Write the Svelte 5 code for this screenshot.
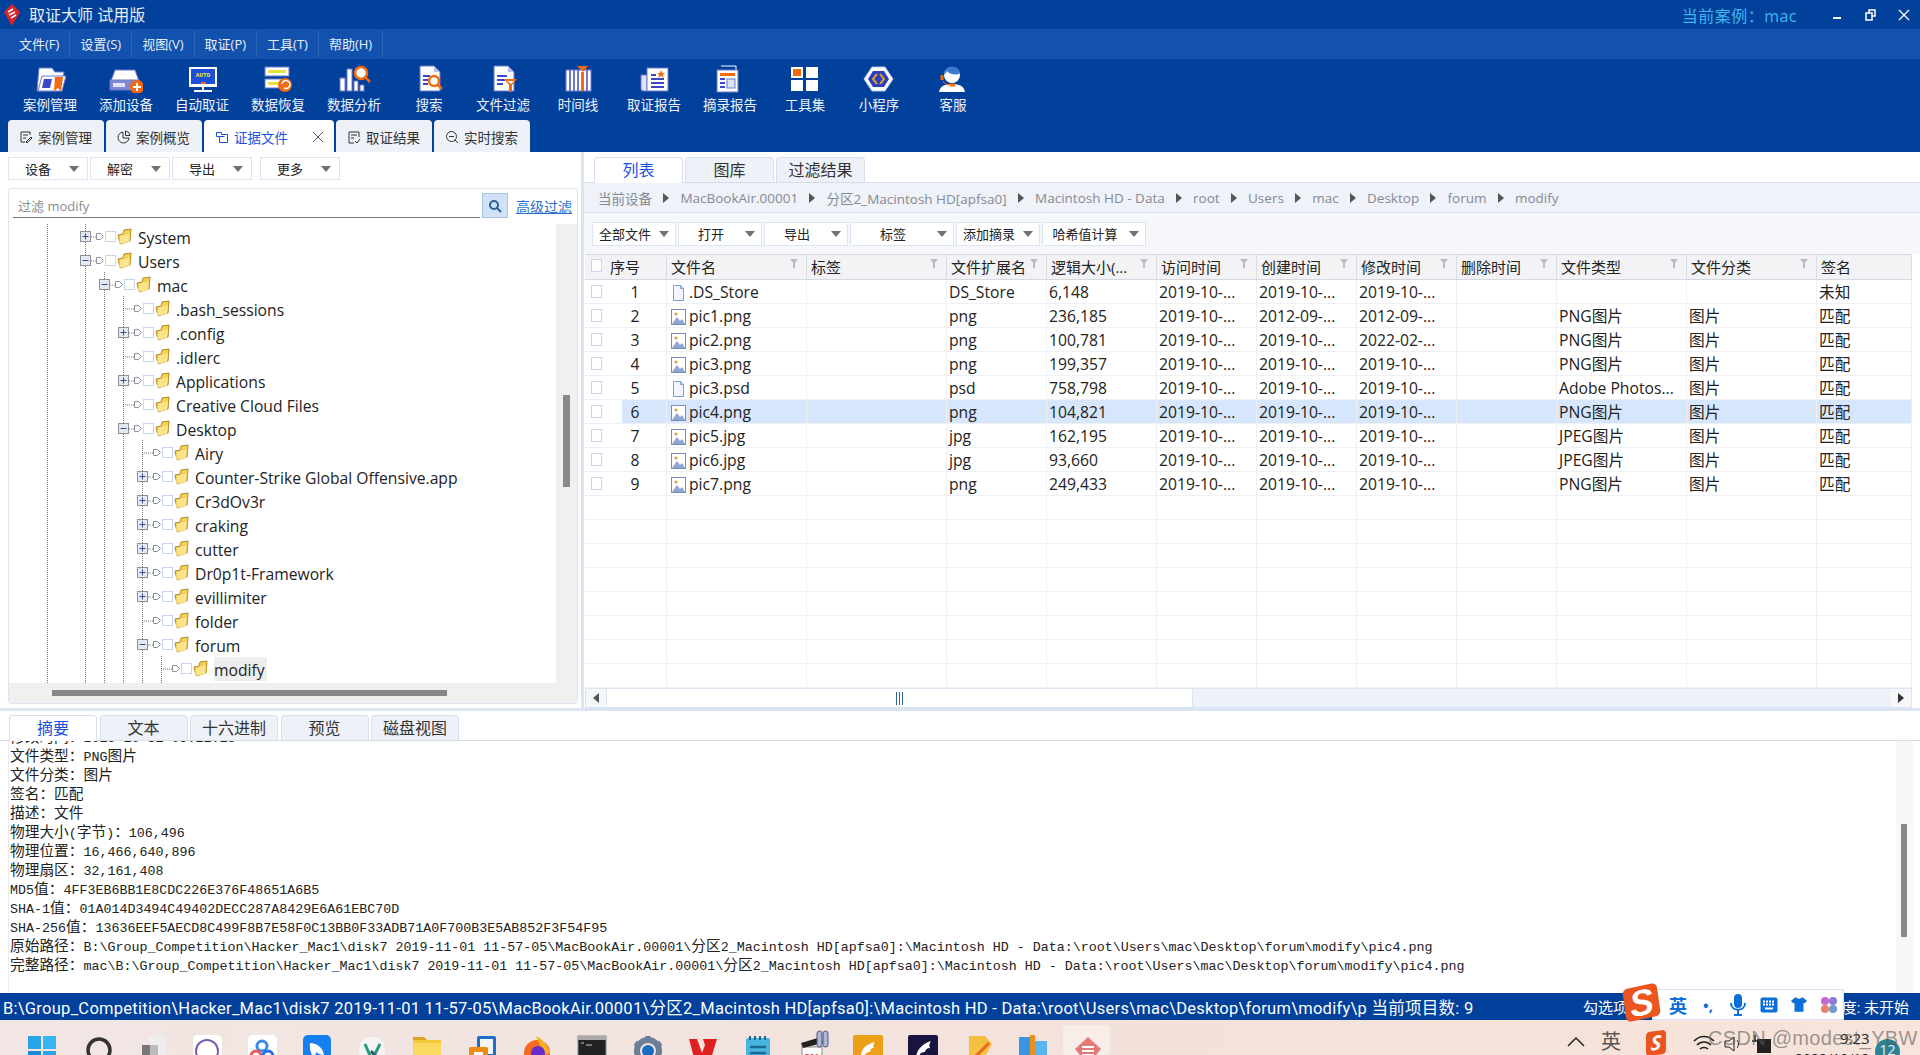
<script>
	const ln = '#6f78cc'
	const or = '#f36a10'
	const colon = '\uff1a'

	const menus = ['文件(F)', '设置(S)', '视图(V)', '取证(P)', '工具(T)', '帮助(H)']

	// shift: the original buttons are not evenly spaced
	const tools = [
		{ label: '案例管理', shift: 0, svg: `<path d="M6 3h13l3 4h9l-3 19H4z" fill="#fff" stroke="${ln}"/><path d="M9 11h24l-4 15H5z" fill="#fff" stroke="${ln}"/><path d="M11 14h8l-2 9H9z" fill="#3c46c8"/><path d="M22 12h8l-2 14-3-3-4 3z" fill="${or}"/>` },
		{ label: '添加设备', shift: 0, svg: `<path d="M6 5h20l4 11H2z" fill="#fff" stroke="${ln}"/><rect x="1" y="15" width="29" height="10" fill="#8088d0" stroke="${ln}"/><rect x="4" y="18" width="12" height="4" fill="#dfe3f5"/><circle cx="28" cy="22" r="7" fill="${or}"/><path d="M28 18v8M24 22h8" stroke="#fff" stroke-width="2"/>` },
		{ label: '自动取证', shift: 0, svg: `<rect x="4" y="2" width="28" height="20" fill="#fff"/><rect x="6" y="4" width="24" height="15" fill="#1d4fd8"/><text x="18" y="12" fill="#f5e63a" font-size="6" font-family="Liberation Mono" font-weight="700" text-anchor="middle">AUTO</text><rect x="16" y="17" width="5" height="2" fill="${or}"/><path d="M18 22v3M9 26h18" stroke="#fff" stroke-width="2"/>` },
		{ label: '数据恢复', shift: 0, svg: `<rect x="4" y="2" width="24" height="9" fill="#fff" stroke="${ln}"/><rect x="7" y="5" width="18" height="3" fill="#e6e23a"/><rect x="4" y="14" width="17" height="9" fill="#fff" stroke="${ln}"/><rect x="7" y="17" width="11" height="3" fill="#e6e23a"/><circle cx="24" cy="20" r="7" fill="${or}"/><path d="M21 19a4 4 0 1 1 2 4" fill="none" stroke="#fff" stroke-width="1.6"/>` },
		{ label: '数据分析', shift: 0, svg: `<rect x="3" y="13" width="5" height="13" fill="#fff" stroke="${ln}"/><rect x="10" y="4" width="5" height="22" fill="#fff" stroke="${ln}"/><rect x="17" y="16" width="4" height="10" fill="#fff" stroke="${ln}"/><rect x="23" y="20" width="4" height="6" fill="#fff" stroke="${ln}"/><circle cx="24" cy="8" r="6" fill="#fff" stroke="${or}" stroke-width="2.5"/><path d="M28 12l5 5" stroke="${or}" stroke-width="2.5"/>` },
		{ label: '搜索', shift: -1, svg: `<path d="M8 1h14l6 6v19H8z" fill="#fff" stroke="${ln}"/><path d="M22 1l6 6h-6z" fill="#b8bde8"/><path d="M11 11h7M11 15h5M11 19h5" stroke="#3c46c8" stroke-width="2"/><circle cx="22" cy="16" r="5" fill="#fff" stroke="${or}" stroke-width="2.5"/><path d="M26 20l4 4" stroke="${or}" stroke-width="2.5"/>` },
		{ label: '文件过滤', shift: -2, svg: `<path d="M8 1h14l6 6v19H8z" fill="#fff" stroke="${ln}"/><path d="M22 1l6 6h-6z" fill="#b8bde8"/><path d="M11 11h10M11 15h8M11 19h6" stroke="#3c46c8" stroke-width="2"/><path d="M18 14h13l-5 6v7h-3v-7z" fill="${or}"/><path d="M21 16h7l-3 3z" fill="#fff"/>` },
		{ label: '时间线', shift: -1, svg: `<rect x="5" y="5" width="25" height="21" fill="#fff" stroke="${ln}"/><path d="M9 5v21M13 5v21M17 5v21M26 5v21" stroke="#6f78cc" stroke-width="2"/><rect x="20" y="7" width="3" height="19" fill="${or}"/><path d="M16 1h11l-5 6z" fill="${or}"/>` },
		{ label: '取证报告', shift: 0, svg: `<path d="M4 10h6v16H6a2 2 0 0 1-2-2z" fill="#dfe3f5" stroke="${ln}"/><rect x="10" y="3" width="21" height="23" fill="#fff" stroke="${ln}"/><path d="M14 10h5M14 14h13M14 18h13M14 22h13" stroke="#3c46c8" stroke-width="2"/><path d="M24 5l1.2 3h3l-2.4 2 1 3-2.8-2-2.8 2 1-3-2.4-2h3z" fill="${or}"/>` },
		{ label: '摘录报告', shift: 0, svg: `<path d="M8 1h15v21" fill="none" stroke="#fff"/><rect x="4" y="5" width="21" height="22" fill="#fff" stroke="${ln}"/><rect x="7" y="8" width="15" height="3" fill="${or}"/><path d="M7 14h5M7 18h5M7 22h5" stroke="#3c46c8" stroke-width="2"/><rect x="14" y="14" width="8" height="9" fill="#dfe3f5" stroke="${ln}"/>` },
		{ label: '工具集', shift: -1, svg: `<rect x="3" y="2" width="12" height="11" fill="#fff"/><rect x="5" y="4" width="8" height="7" fill="${or}"/><rect x="18" y="2" width="12" height="11" fill="#fff"/><rect x="3" y="15" width="12" height="11" fill="#fff"/><rect x="18" y="15" width="12" height="11" fill="#fff"/>` },
		{ label: '小程序', shift: -2, svg: `<path d="M10 2h13l8 12-8 12H10L2 14z" fill="#fff" stroke="#b8c5f0"/><path d="M11 6h11l5 8-5 8H11l-5-8z" fill="#2a3fc0"/><path d="M15 9l-4 5 4 5M18 9l4 5-4 5" fill="none" stroke="#f0a020" stroke-width="2"/>` },
		{ label: '客服', shift: -2, svg: `<path d="M3 27c1-6 6-8 13-8s12 2 13 8z" fill="#fff"/><circle cx="16" cy="10" r="8" fill="#fff"/><path d="M8 10a8 8 0 0 1 16-1c-6 1-11 0-13-3-1 2-2 3-3 4z" fill="#3a7ad0"/><path d="M6 10v5" stroke="${or}" stroke-width="3"/><path d="M7 16c1 3 4 4 8 4" stroke="${or}" fill="none"/><rect x="14" y="18.500" width="5" height="3" fill="${or}"/>` }
	]

	const mainTabs = [
		{ label: '案例管理', icon: 'edit' },
		{ label: '案例概览', icon: 'pie' },
		{ label: '证据文件', icon: 'copy', active: true },
		{ label: '取证结果', icon: 'result' },
		{ label: '实时搜索', icon: 'search' }
	]

	const tree = [
		{ name: 'System', level: 0, mark: 'plus' },
		{ name: 'Users', level: 0, mark: 'minus' },
		{ name: 'mac', level: 1, mark: 'minus' },
		{ name: '.bash_sessions', level: 2 },
		{ name: '.config', level: 2, mark: 'plus' },
		{ name: '.idlerc', level: 2 },
		{ name: 'Applications', level: 2, mark: 'plus' },
		{ name: 'Creative Cloud Files', level: 2 },
		{ name: 'Desktop', level: 2, mark: 'minus' },
		{ name: 'Airy', level: 3 },
		{ name: 'Counter-Strike Global Offensive.app', level: 3, mark: 'plus' },
		{ name: 'Cr3dOv3r', level: 3, mark: 'plus' },
		{ name: 'craking', level: 3, mark: 'plus' },
		{ name: 'cutter', level: 3, mark: 'plus' },
		{ name: 'Dr0p1t-Framework', level: 3, mark: 'plus' },
		{ name: 'evillimiter', level: 3, mark: 'plus' },
		{ name: 'folder', level: 3 },
		{ name: 'forum', level: 3, mark: 'minus' },
		{ name: 'modify', level: 4, selected: true }
	]
	// dotted guides of the tree: x inside the tree, first y inside the tree
	const guides = [
		[38, 0], [76, 0], [95, 48], [114, 72], [133, 216], [152, 432]
	]

	const crumbs = ['当前设备', 'MacBookAir.00001', '分区2_Macintosh HD[apfsa0]', 'Macintosh HD - Data', 'root', 'Users', 'mac', 'Desktop', 'forum', 'modify']

	const fileBtns = [
		{ label: '全部文件', w: 84 },
		{ label: '打开', w: 84 },
		{ label: '导出', w: 84 },
		{ label: '标签', w: 104 },
		{ label: '添加摘录', w: 84 },
		{ label: '哈希值计算', w: 104 }
	]

	const heads = ['序号', '文件名', '标签', '文件扩展名', '逻辑大小(...', '访问时间', '创建时间', '修改时间', '删除时间', '文件类型', '文件分类', '签名']

	const d = '2019-10-...'
	const rows = [
		[1, '.DS_Store', 'doc', 'DS_Store', '6,148', d, d, d, '', '', '未知'],
		[2, 'pic1.png', 'img', 'png', '236,185', d, '2012-09-...', '2012-09-...', 'PNG图片', '图片', '匹配'],
		[3, 'pic2.png', 'img', 'png', '100,781', d, d, '2022-02-...', 'PNG图片', '图片', '匹配'],
		[4, 'pic3.png', 'img', 'png', '199,357', d, d, d, 'PNG图片', '图片', '匹配'],
		[5, 'pic3.psd', 'doc', 'psd', '758,798', d, d, d, 'Adobe Photos...', '图片', '匹配'],
		[6, 'pic4.png', 'img', 'png', '104,821', d, d, d, 'PNG图片', '图片', '匹配'],
		[7, 'pic5.jpg', 'img', 'jpg', '162,195', d, d, d, 'JPEG图片', '图片', '匹配'],
		[8, 'pic6.jpg', 'img', 'jpg', '93,660', d, d, d, 'JPEG图片', '图片', '匹配'],
		[9, 'pic7.png', 'img', 'png', '249,433', d, d, d, 'PNG图片', '图片', '匹配']
	].map(([seq, name, icon, ext, size, access, created, modified, type, cat, sign]) => ({ seq, name, icon, ext, size, access, created, modified, type, cat, sign }))

	const emptyRows = Array(9).fill(0)

	const bottomTabs = ['摘要', '文本', '十六进制', '预览', '磁盘视图']

	const tail = String.raw`B:\Group_Competition\Hacker_Mac1\disk7 2019-11-01 11-57-05\MacBookAir.00001\分区2_Macintosh HD[apfsa0]:\Macintosh HD - Data:\root\Users\mac\Desktop\forum\modify\pic4.png`
	const summary = [
		'修改时间' + colon + '2019-10-31 05:21:18',
		'文件类型' + colon + 'PNG图片',
		'文件分类' + colon + '图片',
		'签名' + colon + '匹配',
		'描述' + colon + '文件',
		'物理大小(字节)' + colon + '106,496',
		'物理位置' + colon + '16,466,640,896',
		'物理扇区' + colon + '32,161,408',
		'MD5值' + colon + '4FF3EB6BB1E8CDC226E376F48651A6B5',
		'SHA-1值' + colon + '01A014D3494C49402DECC287A8429E6A61EBC70D',
		'SHA-256值' + colon + '13636EEF5AECD8C499F8B7E58F0C13BB0F33ADB71A0F700B3E5AB852F3F54F95',
		'原始路径' + colon + tail,
		'完整路径' + colon + 'mac\\' + tail
	]

	// latin and CJK runs get different sizes, the original font is half-width
	function runs(line) {
		return line.split(/([\u4e00-\u9fff\uff00-\uffef]+)/).filter(Boolean).map((text) => ({
			text,
			cjk: /[\u4e00-\u9fff\uff00-\uffef]/.test(text)
		}))
	}

	const statusPath = String.raw`B:\Group_Competition\Hacker_Mac1\disk7 2019-11-01 11-57-05\MacBookAir.00001\分区2_Macintosh HD[apfsa0]:\Macintosh HD - Data:\root\Users\mac\Desktop\forum\modify\p`

	const taskIcons = [
		`<rect x="1" y="1" width="13" height="13" fill="#2aa4e8"/><rect x="16" y="1" width="13" height="13" fill="#38b6f0"/><rect x="1" y="16" width="13" height="13" fill="#1c86d8"/><rect x="16" y="16" width="13" height="13" fill="#2aa4e8"/>`,
		`<circle cx="17" cy="15" r="11" fill="none" stroke="#333" stroke-width="3.500"/>`,
		`<rect x="12" y="1" width="17" height="24" fill="#eee"/><rect x="5" y="10" width="16" height="20" fill="#777"/><rect x="13" y="10" width="8" height="20" fill="#bbb"/>`,
		`<rect x="1" y="0" width="29" height="30" rx="5" fill="#fff"/><circle cx="15" cy="16" r="11" fill="none" stroke="#7a5fb0" stroke-width="2"/>`,
		`<rect x="1" y="0" width="29" height="30" rx="5" fill="#fff"/><circle cx="15" cy="11" r="5" fill="none" stroke="#3a8ae8" stroke-width="3"/><circle cx="9" cy="21" r="5" fill="none" stroke="#e85a5a" stroke-width="3"/><circle cx="21" cy="21" r="5" fill="none" stroke="#2a6ae8" stroke-width="3"/>`,
		`<rect x="1" y="0" width="28" height="30" rx="5" fill="#1680f0"/><path d="M8 8c6 0 13 4 14 12-3 0-6-1-8-3l-1 8c-3-4-6-10-5-17z" fill="#fff"/>`,
		`<rect x="2" y="2" width="26" height="28" rx="12" fill="#f4f4f4"/><path d="M8 9l7 16L23 9" fill="none" stroke="#2a9a7a" stroke-width="3"/><path d="M14 16l8 9" stroke="#2a5a7a" stroke-width="3"/>`,
		`<path d="M1 2h11l3 3h14v25H1z" fill="#f5c93a"/><rect x="1" y="8" width="28" height="22" fill="#fbd95e"/><path d="M1 2h11l3 3H1z" fill="#d9a520"/>`,
		`<rect x="10" y="1" width="19" height="21" rx="2" fill="#1c70c8"/><rect x="13" y="4" width="13" height="15" fill="#f4f4f4"/><rect x="2" y="12" width="19" height="18" rx="2" fill="#f08a10"/><rect x="7" y="17" width="9" height="13" fill="#fff"/>`,
		`<circle cx="15" cy="18" r="13" fill="#f56a20"/><path d="M14 1c6 3 12 9 14 17l-6 2z" fill="#fbb020"/><circle cx="16" cy="18" r="7" fill="#6a2ac8"/>`,
		`<rect x="1" y="1" width="28" height="29" fill="#222" stroke="#888"/><rect x="1" y="1" width="28" height="4" fill="#aaa"/><path d="M4 8h3M9 10h6" stroke="#ccc"/>`,
		`<circle cx="15" cy="16" r="11" fill="none" stroke="#6a7f95" stroke-width="6"/><path d="M15 1v6M15 25v5M2 8l5 3M23 21l5 3M28 8l-5 3M7 21l-5 3" stroke="#6a7f95" stroke-width="5"/><circle cx="15" cy="16" r="6" fill="#1a6ac0"/>`,
		`<path d="M1 4h8l5 14 3-8-2-6h14l-8 26h-7l-3-8-3 8H8z" fill="#e02020"/>`,
		`<rect x="3" y="3" width="24" height="27" rx="2" fill="#4ab4e0"/><path d="M7 1v4M12 1v4M17 1v4M22 1v4" stroke="#1a6a90" stroke-width="2"/><path d="M7 12h16M7 18h16M7 24h16" stroke="#1a6a90" stroke-width="2.500"/>`,
		`<rect x="4" y="12" width="20" height="18" fill="#fff" stroke="#888"/><path d="M3 8l20-6 2 6-20 5z" fill="#222"/><rect x="19" y="-4" width="5" height="16" rx="2.500" fill="#aab8d8" stroke="#557"/><rect x="25" y="-4" width="5" height="16" rx="2.500" fill="#aab8d8" stroke="#557"/><text x="14" y="25" font-size="9" text-anchor="middle" fill="#c33" font-family="Liberation Sans">321</text>`,
		`<rect x="0" y="0" width="30" height="30" rx="2" fill="#eda017"/><path d="M8 22c0-9 6-13 14-15-2 3-2 5-1 6-3 0-4 2-4 4-3 0-5 1-7 7z" fill="#fff"/>`,
		`<rect x="0" y="0" width="30" height="30" rx="2" fill="#1a1540"/><path d="M8 24c0-9 6-15 15-18-2 3-2 5-1 7-3 0-5 2-5 4-4 0-6 2-7 8z" fill="#fff"/>`,
		`<path d="M6 1h16l7 8-12 21H6z" fill="#f5c040"/><path d="M8 26L26 8" stroke="#e86a20" stroke-width="3"/>`,
		`<rect x="1" y="2" width="13" height="28" fill="#3a94e0"/><rect x="14" y="6" width="15" height="24" fill="#5ab4f0"/><rect x="12" y="0" width="5" height="30" fill="#e89020"/>`,
		`<path d="M15 2l13 12-13 16L2 14z" fill="#d82020"/><path d="M9 12h12M9 16h12M9 20h12" stroke="#fff" stroke-width="2"/>`
	]
</script>

<div class="page">
	<header class="title">
		<svg class="logo" width="20" height="24" viewBox="0 0 20 24"><path d="M10 1l8 8-8 14-8-14z" fill="#d8242a"/><path d="M6 9l5-3M7 12l6-3M9 15l5-3" stroke="#fff" stroke-width="1.500"/></svg>
		<span class="app-name">取证大师 试用版</span>
		<span class="case-name">当前案例{colon}mac</span>
		<div class="win-btns">
			<svg width="16" height="16" viewBox="0 0 16 16"><path d="M3 11h8" stroke="#fff" stroke-width="2"/></svg>
			<svg width="16" height="16" viewBox="0 0 16 16"><path d="M6 6V3h6v6H9M3 6h6v7H3z" fill="none" stroke="#fff" stroke-width="1.500"/></svg>
			<svg width="16" height="16" viewBox="0 0 16 16"><path d="M3 3l10 10M13 3L3 13" stroke="#fff" stroke-width="1.300"/></svg>
		</div>
	</header>

	<nav class="menu">
		{#each menus as m}
			<span class="menu-item">{m}</span>
		{/each}
	</nav>

	<div class="tools">
		{#each tools as t}
			<div class="tool" style="margin-left:{t.shift}px">
				<svg width="34" height="28" viewBox="0 0 34 28">{@html t.svg}</svg>
				<span>{t.label}</span>
			</div>
		{/each}
	</div>

	<div class="main-tabs">
		{#each mainTabs as t}
			<div class="main-tab" class:active={t.active}>
				<svg width="14" height="14" viewBox="0 0 14 14" fill="none" stroke="currentColor">
					{#if t.icon === 'edit'}
						<path d="M11 5V2H2v10h4M4 5h5M4 8h3M7 12l5-5 1 1-5 5z" />
					{:else if t.icon === 'pie'}
						<path d="M6 2a5.500 5.500 0 1 0 6 6H6zM8.500 1v4.500H13A5 5 0 0 0 8.500 1z" />
					{:else if t.icon === 'copy'}
						<path d="M1.500 2.500h5v2h6v8h-8v-6h-3zM4.500 6.500h5" />
					{:else if t.icon === 'result'}
						<path d="M12 7V2H2v11h5M4 5h6M4 8h3M8 11l2 2 3-4" />
					{:else}
						<circle cx="6.500" cy="6.500" r="5" /><path d="M4 6.500h5M10 10l3 3" />
					{/if}
				</svg>
				<span>{t.label}</span>
				{#if t.active}
					<svg class="tab-close" width="12" height="12" viewBox="0 0 12 12"><path d="M1 1l10 10M11 1L1 11" stroke="#555" /></svg>
				{/if}
			</div>
		{/each}
	</div>

	<main class="work">
		<section class="left">
			<div class="drop-row">
				<button class="drop left-drop">设备<i class="caret"></i></button>
				<button class="drop left-drop">解密<i class="caret"></i></button>
				<button class="drop left-drop">导出<i class="caret"></i></button>
				<button class="drop left-drop more">更多<i class="caret"></i></button>
			</div>
			<div class="tree-box">
				<div class="filter">
					<div class="filter-input">过滤 modify</div>
					<div class="filter-btn">
						<svg width="14" height="14" viewBox="0 0 14 14"><circle cx="6" cy="6" r="4" fill="none" stroke="#2f5f98" stroke-width="2" /><path d="M9 9l4 4" stroke="#2f5f98" stroke-width="2" /></svg>
					</div>
					<span class="filter-link">高级过滤</span>
				</div>
				<div class="tree">
					{#each guides as g}
						<i class="guide" style="left:{g[0]}px;top:{g[1]}px"></i>
					{/each}
					{#each tree as n}
						<div class="node" style="padding-left:{71 + n.level * 19}px">
							<svg width="52" height="24" viewBox="0 0 52 24">
								<path d="M5 12h11" stroke="#777" stroke-dasharray="1 1" />
								{#if n.mark}
									<rect x="0.500" y="6.500" width="10" height="10" fill="#e4e9f2" stroke="#8a8f9a" />
									<path d="M2.500 11.500h6" stroke="#34508c" />
									{#if n.mark === 'plus'}<path d="M5.500 8.500v6" stroke="#34508c" />{/if}
								{/if}
								<path d="M16.500 8.500h4l3 3-3 3h-4z" fill="#fff" stroke="#8a8f9a" />
								<rect x="25.500" y="6.500" width="10" height="10" fill="#fff" stroke="#c8d6f4" />
								<path d="M38 10l5-1 1-4 7-1-1 12-10 3z" fill="#f5cf52" stroke="#b58a1c" />
								<path d="M40 11l10-3-1 9-10 2z" fill="#fce48a" />
							</svg>
							<span class="node-name" class:selected={n.selected}>{n.name}</span>
						</div>
					{/each}
					<div class="tree-vbar"><i></i></div>
				</div>
				<div class="tree-hbar"><i></i></div>
			</div>
		</section>

		<section class="right">
			<div class="tabs right-tabs">
				<div class="tab active">列表</div>
				<div class="tab">图库</div>
				<div class="tab wide">过滤结果</div>
			</div>
			<div class="crumbs">
				{#each crumbs as c, i}
					{#if i > 0}<i class="crumb-arrow"></i>{/if}
					<span>{c}</span>
				{/each}
			</div>
			<div class="file-tools">
				{#each fileBtns as b}
					<button class="drop" style="width:{b.w}px">{b.label}<i class="caret"></i></button>
				{/each}
			</div>
			<div class="grid">
				<div class="row head">
					<div class="cell check-cell">
						<i class="check"></i><span>序号</span>
					</div>
					{#each heads.slice(1) as h, i}
						<div class="cell">
							<span>{h}</span>
							{#if i < heads.length - 2}
								<svg class="funnel" width="10" height="10" viewBox="0 0 10 10"><path d="M1 1h8L6 5v5H4V5z" fill="#b9bcc2" /></svg>
							{/if}
						</div>
					{/each}
				</div>
				<div class="grid-body">
					{#each rows as r}
						<div class="row" class:picked={r.seq === 6}>
							<div class="cell check-cell">
								<i class="check"></i><span class="seq">{r.seq}</span>
							</div>
							<div class="cell name-cell">
								<svg width="15" height="16" viewBox="0 0 15 16">
									{#if r.icon === 'doc'}
										<path d="M2.500 0.500h7l3 3v12h-10z" fill="#f2f7ff" stroke="#7a9ccf" /><path d="M9.500 0.500v3h3" fill="none" stroke="#7a9ccf" />
									{:else}
										<rect x="0.500" y="0.500" width="14" height="15" fill="#fff" stroke="#7d8cb8" /><circle cx="5" cy="5" r="1.500" fill="#f2974a" /><path d="M1 15l5-7 3 4 2-2 3 5z" fill="#8fa5d4" />
									{/if}
								</svg>
								<span>{r.name}</span>
							</div>
							<div class="cell"></div>
							<div class="cell">{r.ext}</div>
							<div class="cell">{r.size}</div>
							<div class="cell">{r.access}</div>
							<div class="cell">{r.created}</div>
							<div class="cell">{r.modified}</div>
							<div class="cell"></div>
							<div class="cell">{r.type}</div>
							<div class="cell">{r.cat}</div>
							<div class="cell">{r.sign}</div>
						</div>
					{/each}
					{#each emptyRows as _}
						<div class="row">
							{#each heads as h}<div class="cell"></div>{/each}
						</div>
					{/each}
				</div>
				<div class="grid-hbar">
					<span class="bar-end"><i class="tri-left"></i></span>
					<span class="bar-thumb"><i></i></span>
					<span class="bar-rest"></span>
					<span class="bar-end"><i class="tri-right"></i></span>
				</div>
			</div>
		</section>
	</main>

	<section class="bottom">
		<div class="tabs bottom-tabs">
			{#each bottomTabs as t, i}
				<div class="tab" class:active={i === 0}>{t}</div>
			{/each}
		</div>
		<div class="summary">
			<div class="lines">
				{#each summary as line}
					<div class="line">
						{#each runs(line) as run}<span class:cjk={run.cjk}>{run.text}</span>{/each}
					</div>
				{/each}
			</div>
			<div class="summary-bar"><i></i></div>
		</div>
	</section>

	<footer class="status">
		<span class="status-path">{statusPath} 当前项目数: 9</span>
		<span class="status-check">勾选项目数: 0</span>
		<span class="status-prog">进度: 未开始</span>
	</footer>

	<div class="taskbar">
		<i class="task-active"></i>
		{#each taskIcons as icon}
			<div class="task-item">
				<svg width="30" height="30" viewBox="0 0 30 30" overflow="visible">{@html icon}</svg>
			</div>
		{/each}
		<div class="tray">
			<svg width="22" height="12" viewBox="0 0 22 12"><path d="M3 11l8-8 8 8" fill="none" stroke="#222" stroke-width="1.500" /></svg>
			<span class="tray-ime">英</span>
			<span class="tray-s">S</span>
			<svg class="tray-wifi" width="22" height="18" viewBox="0 0 22 18"><path d="M1 6c6-6 14-6 20 0M4 10c4-4 10-4 14 0M7 14c2-2 6-2 8 0" fill="none" stroke="#222" stroke-width="1.600" /></svg>
			<svg class="tray-sound" width="20" height="18" viewBox="0 0 20 18"><path d="M2 6h4l5-4v14l-5-4H2z" fill="none" stroke="#222" /><path d="M14 5c2 2 2 6 0 8" fill="none" stroke="#222" /></svg>
			<svg class="tray-power" width="20" height="18" viewBox="0 0 20 18"><rect x="5" y="4" width="14" height="14" fill="#222" /><path d="M0 6h5M3 0v6" stroke="#222" stroke-width="1.500" /></svg>
		</div>
		<span class="clock">9:23</span>
		<span class="clock-date">2022/10/12</span>
		<span class="badge">12</span>
		<span class="watermark">CSDN @modest_YBW</span>
	</div>

	<div class="ime">
		<span class="ime-logo"><b>S</b></span>
		<div class="ime-bar">
			<span class="ime-lang">英</span>
			<span class="ime-punct">•,</span>
			<svg class="ime-mic" width="16" height="24" viewBox="0 0 16 24"><rect x="4" y="1" width="8" height="14" rx="4" fill="#0a6fd8" /><path d="M1 10c0 9 14 9 14 0M8 17v5M4 22h8" fill="none" stroke="#0a6fd8" stroke-width="2" /></svg>
			<svg class="ime-kb" width="18" height="16" viewBox="0 0 18 16"><rect x="0.500" y="0.500" width="17" height="15" rx="2" fill="#0a6fd8" /><path d="M3 4.500h12M3 7.500h12" stroke="#fff" stroke-dasharray="2 1" stroke-width="2" /><path d="M5 11.500h8" stroke="#fff" stroke-width="2" /></svg>
			<svg width="18" height="17" viewBox="0 0 20 18"><path d="M6 1l4 2 4-2 5 4-3 3-1-1v10H5V7L4 8 1 5z" fill="#0a6fd8" /></svg>
			<svg width="18" height="18" viewBox="0 0 18 18"><circle cx="5" cy="5" r="4" fill="#c06ad0" /><circle cx="13" cy="5" r="4" fill="#8a7ad8" /><circle cx="5" cy="13" r="4" fill="#e8806a" /><circle cx="13" cy="13" r="4" fill="#6a9ad8" /></svg>
		</div>
	</div>
</div>

<style>
	:global(body) {
		margin: 0;
		background: #fff;
	}

	.page {
		position: relative;
		display: flex;
		flex-direction: column;
		width: 1920px;
		height: 1055px;
		overflow: hidden;
		font-family: 'Open Sans', 'Noto Sans CJK SC', sans-serif;
		color: #222;
	}

	i {
		display: block;
		font-style: normal;
	}

	button {
		font: inherit;
		color: inherit;
		background: #fff;
		padding: 0;
	}

	/* title */
	.title {
		display: flex;
		align-items: center;
		height: 29px;
		background: #01419c;
		color: #fff;
	}
	.logo {
		margin-left: 2px;
	}
	.app-name {
		margin: 0 0 2px 7px;
		font-size: 16px;
		color: #e8eef8;
	}
	.case-name {
		margin-left: auto;
		font-size: 16px;
		letter-spacing: 0.5px;
		color: #3fb6ef;
	}
	.win-btns {
		display: flex;
		gap: 17px;
		margin: 0 8px 0 33px;
	}

	/* menu */
	.menu {
		display: flex;
		align-items: center;
		height: 30px;
		padding-left: 9px;
		background: #1251ad;
	}
	.menu-item {
		padding: 0 10px;
		line-height: 26px;
		font-size: 13px;
		color: #e8eef8;
		border-right: 1px solid #2c65b8;
	}

	/* big toolbar */
	.tools {
		display: flex;
		height: 61px;
		padding-left: 12px;
		background: #01419c;
	}
	.tool {
		display: flex;
		flex-direction: column;
		align-items: center;
		width: 76px;
		flex: none;
		padding-top: 6px;
		color: #eef3fb;
		font-size: 13.500px;
		line-height: 20px;
	}
	.tool svg {
		margin-bottom: 2px;
	}

	/* main tabs */
	.main-tabs {
		display: flex;
		gap: 2px;
		height: 32px;
		padding-left: 8px;
		background: #01419c;
	}
	.main-tab {
		display: flex;
		align-items: center;
		gap: 5px;
		width: 96px;
		padding: 1px 0 0 11px;
		box-sizing: border-box;
		background: #eef1f7;
		border-radius: 4px 4px 0 0;
		font-size: 13.500px;
		color: #333;
	}
	.main-tab.active {
		width: 130px;
		background: #fff;
		color: #1a50e0;
	}
	.tab-close {
		margin-left: auto;
		margin-right: 10px;
	}

	/* work area */
	.work {
		display: flex;
		height: 556px;
		flex: none;
		border-bottom: 3px solid #dbe4f3;
	}
	.left {
		display: flex;
		flex-direction: column;
		width: 581px;
		flex: none;
		box-sizing: border-box;
		padding: 5px 3px 0 8px;
	}
	.drop-row {
		display: flex;
		gap: 2px;
		height: 23px;
	}
	.drop {
		position: relative;
		display: block;
		box-sizing: border-box;
		height: 24px;
		border: 1px solid #dbe4f3;
		font-size: 13px;
		line-height: 21px;
		text-align: left;
		padding-left: 16px;
		flex: none;
	}
	.left-drop {
		width: 80px;
		height: 23px;
		line-height: 22px;
	}
	.left-drop .caret {
		right: 8px;
	}
	.more {
		margin-left: 6px;
	}
	.caret {
		position: absolute;
		right: 6px;
		top: 8px;
		border: 5px solid transparent;
		border-top: 6px solid #6e7178;
		border-bottom: 0;
	}
	.tree-box {
		display: flex;
		flex-direction: column;
		height: 516px;
		margin-top: 8px;
		box-sizing: border-box;
		border: 1px solid #dbe4f3;
		border-radius: 3px;
		overflow: hidden;
	}
	.filter {
		display: flex;
		align-items: stretch;
		flex: none;
		height: 25px;
		margin: 4px 0 0 4px;
	}
	.filter-input {
		width: 467px;
		box-sizing: border-box;
		padding-left: 5px;
		border-bottom: 1px solid #777;
		font-size: 13px;
		line-height: 26px;
		color: #8d8d8d;
		background: #fff;
	}
	.filter-btn {
		display: flex;
		align-items: center;
		justify-content: center;
		width: 26px;
		margin-left: 2px;
		background: #cfe2f8;
		border: 1px solid #a8c4e8;
		box-sizing: border-box;
	}
	.filter-link {
		margin-left: 8px;
		font-size: 14px;
		line-height: 27px;
		color: #2a6fd0;
		text-decoration: underline;
	}
	.tree {
		position: relative;
		flex: 1;
		margin-top: 6px;
		padding-top: 1px;
		overflow: hidden;
	}
	.guide {
		position: absolute;
		bottom: 0;
		border-left: 1px dotted #777;
	}
	.node {
		position: relative;
		display: flex;
		align-items: center;
		height: 24px;
	}
	.node-name {
		margin-left: 6px;
		padding: 2px 2px 0 0;
		font-size: 15.700px;
		line-height: 22px;
		white-space: nowrap;
	}
	.node-name.selected {
		background: #eeeeee;
	}
	.tree-vbar {
		position: absolute;
		top: 0;
		right: 0;
		bottom: 0;
		width: 21px;
		background: #f0f0f0;
	}
	.tree-vbar i {
		position: absolute;
		left: 7px;
		top: 171px;
		width: 7px;
		height: 92px;
		background: #888;
	}
	.tree-hbar {
		flex: none;
		height: 20px;
		background: #f0f0f0;
		display: flex;
		align-items: center;
	}
	.tree-hbar i {
		width: 395px;
		height: 6px;
		margin-left: 43px;
		background: #888;
	}

	/* right side */
	.right {
		display: flex;
		flex-direction: column;
		flex: 1;
		min-width: 0;
		border-left: 3px solid #dbe4f3;
		padding-left: 0;
	}
	.tabs {
		display: flex;
		flex: none;
		border-bottom: 1px solid #d5dcea;
		box-sizing: border-box;
	}
	.tab {
		position: relative;
		width: 89px;
		box-sizing: border-box;
		margin-right: 2px;
		background: #eef1f7;
		border: 1px solid #d5dff0;
		border-bottom: 0;
		border-radius: 4px 4px 0 0;
		text-align: center;
		font-size: 16px;
		color: #333;
	}
	.tab.active {
		background: #fff;
		color: #1a50e0;
		margin-bottom: -1px;
	}
	.right-tabs {
		height: 31px;
		padding: 5px 0 0 10px;
	}
	.right-tabs .tab {
		line-height: 25px;
	}
	.crumbs {
		display: flex;
		align-items: center;
		flex: none;
		gap: 11.200px;
		height: 30px;
		box-sizing: border-box;
		padding-left: 14px;
		background: #eff2f8;
		border-bottom: 1px solid #dfe5f0;
		font-size: 13.500px;
		color: #858a94;
		white-space: nowrap;
	}
	.crumb-arrow {
		border: 5px solid transparent;
		border-left: 6px solid #555;
		border-right: 0;
	}
	.file-tools {
		display: flex;
		gap: 2px;
		flex: none;
		height: 41px;
		box-sizing: border-box;
		padding: 9px 0 0 8px;
		background: #f5f7fb;
	}
	.file-tools .drop {
		padding-left: 4px;
		padding-right: 22px;
		text-align: center;
	}
	.grid {
		display: flex;
		flex-direction: column;
		flex: 1;
		min-height: 0;
		width: 1327px;
		margin-left: 1px;
	}
	.grid-body {
		flex: 1;
		min-height: 0;
		overflow: hidden;
	}
	.row {
		display: grid;
		grid-template-columns: 82px 140px 140px 100px 110px 100px 100px 100px 100px 130px 130px 95px;
		height: 24px;
		box-sizing: border-box;
		border-bottom: 1px solid #eef0f4;
		font-size: 15.700px;
		line-height: 21px;
	}
	.row .cell {
		padding-top: 2px;
	}
	.row.head {
		height: 26px;
		background: #f3f3f5;
		border-top: 1px solid #d5d8e0;
		border-bottom: 1px solid #d5d8e0;
		font-size: 15px;
		line-height: 23px;
	}
	.row.head .cell {
		padding-top: 0;
	}
	.cell {
		position: relative;
		display: flex;
		align-items: center;
		padding-left: 2px;
		border-right: 1px solid #eef0f4;
		white-space: nowrap;
		overflow: hidden;
		min-width: 0;
	}
	.head .cell {
		padding-left: 4px;
		border-right-color: #dadde4;
	}
	.funnel {
		position: absolute;
		right: 7px;
		top: 3px;
	}
	.check-cell {
		padding-left: 6px;
	}
	.check {
		flex: none;
		width: 9px;
		height: 11px;
		border: 1px solid #c8d6f4;
		background: #fff;
		margin-top: -3px;
	}
	.head .check-cell {
		padding-left: 6px;
	}
	.head .check-cell span {
		margin-left: 8px;
	}
	.seq {
		margin-left: 26px;
		width: 14px;
		text-align: center;
	}
	.name-cell {
		gap: 3px;
		padding-left: 4px;
	}
	.picked .cell {
		background: #d6e7fd;
	}
	.picked .check-cell {
		background: linear-gradient(to right, #fff 37px, #d6e7fd 37px);
	}
	.grid-hbar {
		display: flex;
		flex: none;
		height: 20px;
		box-sizing: border-box;
		border: 1px solid #dbe4f3;
	}
	.bar-end {
		display: flex;
		align-items: center;
		justify-content: center;
		width: 20px;
		flex: none;
		background: #f5f7fb;
	}
	.tri-left {
		border: 5px solid transparent;
		border-right: 6px solid #555;
		border-left: 0;
	}
	.tri-right {
		border: 5px solid transparent;
		border-left: 6px solid #333;
		border-right: 0;
	}
	.bar-thumb {
		display: flex;
		align-items: center;
		justify-content: center;
		width: 585px;
		flex: none;
		border: 1px solid #dbe4f3;
		border-width: 0 1px;
		background: #fff;
	}
	.bar-thumb i {
		width: 5px;
		height: 13px;
		border: 1px solid #2f5f98;
		border-width: 0 1px;
		background: linear-gradient(to right, transparent 2px, #2f5f98 2px, #2f5f98 3px, transparent 3px);
	}
	.bar-rest {
		flex: 1;
		background: #eef1f7;
	}

	/* bottom */
	.bottom {
		display: flex;
		flex-direction: column;
		height: 282px;
		flex: none;
	}
	.bottom-tabs {
		height: 30px;
		padding: 4px 0 0 9px;
	}
	.bottom-tabs .tab {
		width: 88px;
		line-height: 25px;
		margin-right: 2.500px;
	}
	.summary {
		position: relative;
		flex: 1;
		min-height: 0;
		margin-left: 8px;
		padding-left: 1px;
		border-left: 1px solid #e6ebf5;
		overflow: hidden;
	}
	.lines {
		margin-top: -15px;
	}
	.line {
		height: 19px;
		line-height: 19px;
		font-family: 'Liberation Mono', 'Noto Sans CJK SC', monospace;
		font-size: 13.330px;
		white-space: pre;
		color: #222;
	}
	.line .cjk {
		font-family: 'Noto Sans CJK SC', sans-serif;
		font-size: 14.700px;
	}
	.summary-bar {
		position: absolute;
		top: 0;
		bottom: 0;
		left: 1887px;
		width: 17px;
		background: #f8f8f8;
	}
	.summary-bar i {
		position: absolute;
		top: 83px;
		left: 5px;
		width: 6px;
		height: 113px;
		background: #888;
	}

	/* status */
	.status {
		display: flex;
		align-items: center;
		flex: none;
		height: 27px;
		padding-left: 3px;
		background: #01419c;
		color: #fff;
		font-family: Roboto, 'Noto Sans CJK SC', sans-serif;
		font-size: 16.500px;
		letter-spacing: 0.27px;
		white-space: nowrap;
	}
	.status-check {
		position: absolute;
		left: 1583px;
		font-size: 15px;
		letter-spacing: 0;
	}
	.status-prog {
		position: absolute;
		right: 11px;
		font-size: 15px;
		letter-spacing: 0;
	}

	/* taskbar */
	.taskbar {
		position: relative;
		display: flex;
		flex: none;
		height: 35px;
		padding-left: 14px;
		background: linear-gradient(to right, #f1e6e4, #f3e2da 60%, #f7e4da);
		overflow: hidden;
	}
	.task-item {
		display: flex;
		justify-content: center;
		flex: none;
		width: 55.100px;
		padding-top: 15px;
	}
	.task-active {
		position: absolute;
		left: 1063px;
		top: 5px;
		width: 47px;
		height: 30px;
		border-radius: 4px;
		background: rgba(255, 255, 255, 0.4);
	}
	.tray {
		position: absolute;
		left: 1565px;
		top: 15px;
		display: flex;
		align-items: flex-start;
	}
	.tray-ime {
		margin-left: 14px;
		margin-top: -6px;
		font-size: 20px;
		line-height: 26px;
		color: #555;
	}
	.tray-s {
		margin-left: 25px;
		margin-top: -4px;
		width: 20px;
		height: 24px;
		background: #ea5520;
		border-radius: 4px;
		text-align: center;
		font-size: 20px;
		font-style: italic;
		font-weight: 700;
		line-height: 24px;
		color: #fff;
		transform: skewY(-8deg);
	}
	.tray-wifi {
		margin-left: 27px;
	}
	.tray-sound {
		margin-left: 8px;
	}
	.tray-power {
		margin-left: 9px;
	}
	.clock,
	.clock-date {
		position: absolute;
		font-family: 'Open Sans', sans-serif;
		color: #222;
		font-size: 15px;
		line-height: 18px;
	}
	.clock {
		left: 1840px;
		top: 9px;
	}
	.clock-date {
		left: 1795px;
		top: 30px;
		font-size: 14px;
	}
	.badge {
		position: absolute;
		left: 1875px;
		top: 19px;
		width: 25px;
		height: 25px;
		border-radius: 50%;
		background: #2a8294;
		color: #e8f4f6;
		font-size: 14px;
		line-height: 22px;
		text-align: center;
	}
	.watermark {
		position: absolute;
		left: 1708px;
		top: 6px;
		font-family: 'Liberation Sans', sans-serif;
		font-size: 20px;
		line-height: 24px;
		letter-spacing: 0.3px;
		color: rgba(90, 90, 90, 0.6);
		white-space: nowrap;
	}

	/* input method bar, floats over the status bar */
	.ime {
		position: absolute;
		left: 1622px;
		top: 986px;
		width: 222px;
		height: 34px;
	}
	.ime-bar {
		position: absolute;
		left: 30px;
		top: 3px;
		display: flex;
		align-items: center;
		gap: 12px;
		width: 192px;
		height: 31px;
		box-sizing: border-box;
		padding-left: 16px;
		background: #fff;
		border: 1px solid #d5e4f5;
		color: #0a6fd8;
	}
	.ime-lang {
		width: 18px;
		font-size: 18px;
		font-weight: 700;
	}
	.ime-punct {
		width: 12px;
		font-size: 15px;
		font-weight: 700;
		margin-left: 4px;
		white-space: nowrap;
	}
	.ime-mic {
		margin-left: 3px;
	}
	.ime-kb {
		margin-left: 2px;
	}
	.ime-logo {
		position: absolute;
		z-index: 1;
		left: 2px;
		top: 0;
		width: 35px;
		height: 33px;
		border-radius: 5px;
		background: #ea5520;
		transform: rotate(-12deg) skewX(-4deg);
		text-align: center;
		color: #fff;
	}
	.ime-logo b {
		font-family: 'Liberation Sans', sans-serif;
		font-size: 36px;
		font-style: italic;
		line-height: 33px;
	}
</style>
